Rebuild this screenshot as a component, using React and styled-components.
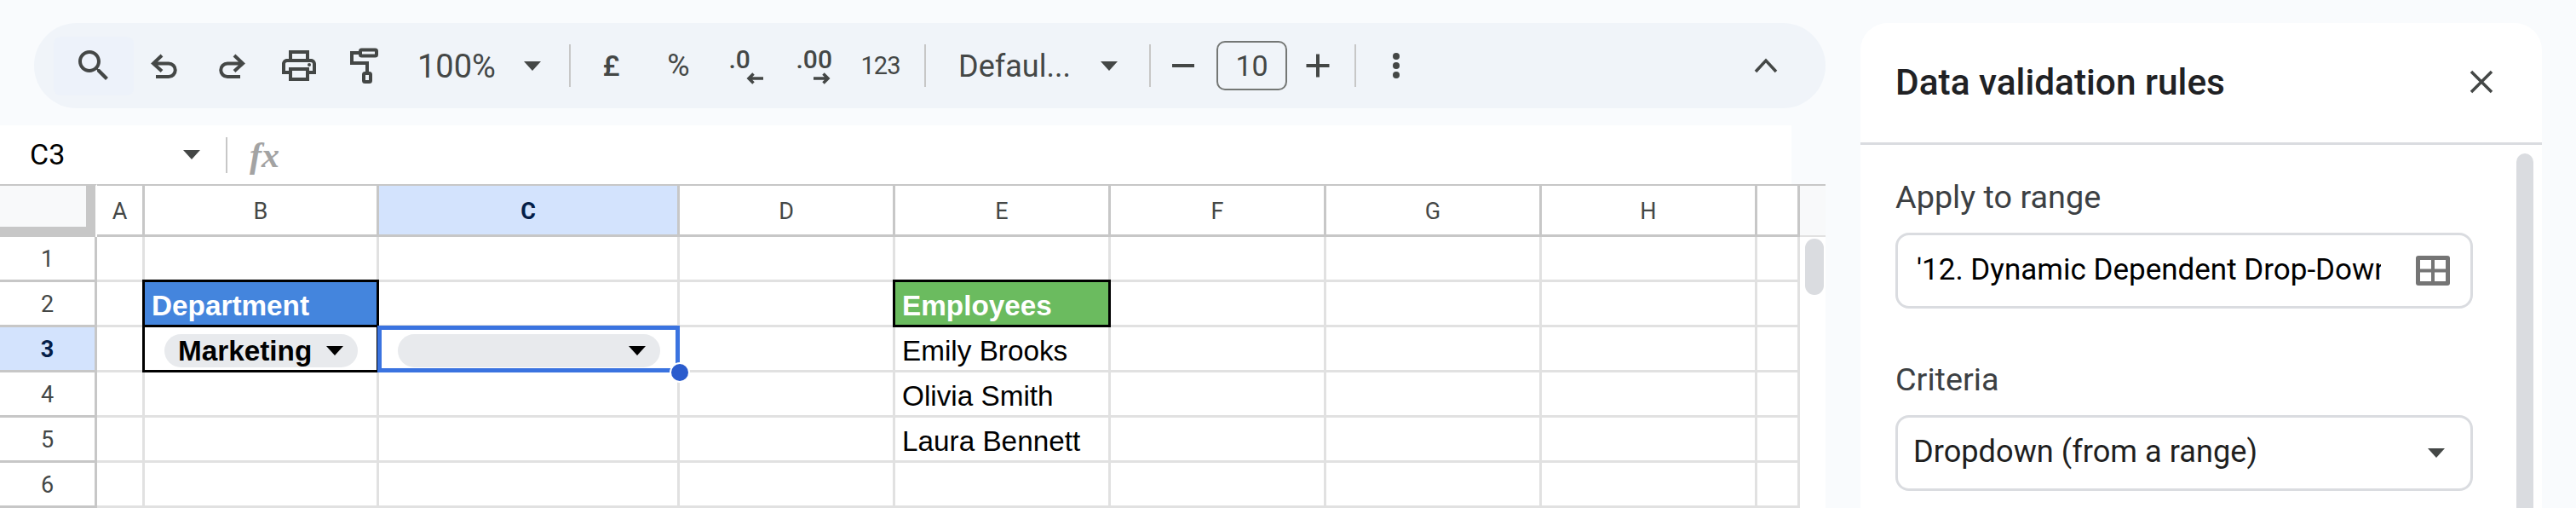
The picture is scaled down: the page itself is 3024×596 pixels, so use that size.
import React from "react";
import styled, { createGlobalStyle } from "styled-components";

const GlobalStyle = createGlobalStyle`
  html, body {
    margin: 0;
    padding: 0;
    height: 596px;
    overflow: hidden;
    background: #f9fbfd;
  }
  * {
    box-sizing: border-box;
  }
`;

const COLUMNS = ["A", "B", "C", "D", "E", "F", "G", "H", ""];
const ROWS = [1, 2, 3, 4, 5, 6];

function ToolbarIcons() {
  return (
    <>
      <SearchButton>
        <Icon viewBox="0 0 24 24" $fill>
          <path d="M15.5 14h-.79l-.28-.27C15.41 12.59 16 11.11 16 9.5 16 5.91 13.09 3 9.5 3S3 5.91 3 9.5 5.91 16 9.5 16c1.61 0 3.09-.59 4.23-1.57l.27.28v.79l5 4.99L20.49 19l-4.99-5zm-6 0C7.01 14 5 11.99 5 9.5S7.01 5 9.5 5 14 7.01 14 9.5 11.99 14 9.5 14z" />
        </Icon>
      </SearchButton>
      <ToolButton>
        <Icon viewBox="0 0 48 48">
          <path d="M21 12 L11 21.5 L21 30.5 M11 21.5 H29 A7.75 7.75 0 0 1 29 37 H14" />
        </Icon>
      </ToolButton>
      <ToolButton>
        <Icon viewBox="0 0 48 48">
          <path d="M27 12 L37 21.5 L27 30.5 M37 21.5 H19 A7.75 7.75 0 0 0 19 37 H34" />
        </Icon>
      </ToolButton>
      <ToolButton>
        <Icon viewBox="0 0 24 24" $fill>
          <path d="M19 8h-1V3H6v5H5c-1.66 0-3 1.34-3 3v6h4v4h12v-4h4v-6c0-1.66-1.34-3-3-3zM8 5h8v3H8V5zm8 12v2H8v-4h8v2zm2-2v-2H6v2H4v-4c0-.55.45-1 1-1h14c.55 0 1 .45 1 1v4h-2z" />
          <circle cx="18" cy="11.5" r="1" />
        </Icon>
      </ToolButton>
      <ToolButton>
        <Icon viewBox="0 0 48 48">
          <rect x="17" y="5.5" width="19" height="7" rx="1.5" />
          <path d="M17 9 H7 V21 H25 V33" />
          <rect x="21" y="33" width="8" height="10" rx="1.5" />
        </Icon>
      </ToolButton>
    </>
  );
}

function Arrow({ left }) {
  return (
    <ArrowIcon viewBox="0 0 20 14">
      <path d={left ? "M20 7 H3 M8.5 1.5 L3 7 L8.5 12.5" : "M0 7 H17 M11.5 1.5 L17 7 L11.5 12.5"} />
    </ArrowIcon>
  );
}

function Toolbar() {
  return (
    <ToolbarBar>
      <ToolbarIcons />
      <Picker $width={199} $pad={21}>
        <PickerLabel $width={125} $size={38}>100%</PickerLabel>
        <Caret />
      </Picker>
      <Divider />
      <FormatGroup>
        <ToolButton><FormatText $size={34} $bold>£</FormatText></ToolButton>
        <ToolButton><FormatText $size={36}>%</FormatText></ToolButton>
        <ToolButton>
          <DecimalStack>
            <DecimalText>.0</DecimalText>
            <Arrow left />
          </DecimalStack>
        </ToolButton>
        <ToolButton>
          <DecimalStack>
            <DecimalText>.00</DecimalText>
            <Arrow />
          </DecimalStack>
        </ToolButton>
        <ToolButton><FormatText $size={29} $tight>123</FormatText></ToolButton>
      </FormatGroup>
      <Divider />
      <Picker $width={262} $pad={38}>
        <PickerLabel $width={167} $size={36}>Defaul...</PickerLabel>
        <Caret />
      </Picker>
      <Divider />
      <SizeButton $width={75} $after={2}>
        <Icon viewBox="0 0 48 48"><path d="M11 24 H37" /></Icon>
      </SizeButton>
      <SizeBox>10</SizeBox>
      <SizeButton $width={72}>
        <Icon viewBox="0 0 48 48"><path d="M10.5 24 H37.5 M24 10.5 V37.5" /></Icon>
      </SizeButton>
      <Divider $before={7} />
      <SizeButton $width={94}>
        <Icon viewBox="0 0 48 48" $fill>
          <circle cx="24" cy="13" r="4" />
          <circle cx="24" cy="24" r="4" />
          <circle cx="24" cy="35" r="4" />
        </Icon>
      </SizeButton>
      <CollapseButton>
        <Icon viewBox="0 0 48 48" $thin><path d="M12 31 L24 18 L36 31" /></Icon>
      </CollapseButton>
    </ToolbarBar>
  );
}

function FormulaRow() {
  return (
    <FormulaBar>
      <NameBox>
        <NameValue>C3</NameValue>
        <Caret />
      </NameBox>
      <FormulaDivider />
      <FxLabel>fx</FxLabel>
    </FormulaBar>
  );
}

function cellContent(col, row) {
  if (col === "B" && row === 2) return <HeaderCellText>Department</HeaderCellText>;
  if (col === "E" && row === 2) return <HeaderCellText>Employees</HeaderCellText>;
  if (col === "E" && row === 3) return <CellText>Emily Brooks</CellText>;
  if (col === "E" && row === 4) return <CellText>Olivia Smith</CellText>;
  if (col === "E" && row === 5) return <CellText>Laura Bennett</CellText>;
  if (col === "B" && row === 3) {
    return (
      <Chip $left={23} $width={227}>
        <ChipText>Marketing</ChipText>
        <Caret $black />
      </Chip>
    );
  }
  if (col === "C" && row === 3) {
    return (
      <Chip $left={22} $width={308}>
        <ChipText />
        <Caret $black />
      </Chip>
    );
  }
  return null;
}

function fillFor(col, row) {
  if (col === "B" && row === 2) return "#4485dd";
  if (col === "E" && row === 2) return "#6bbb5f";
  return "#ffffff";
}

function Sheet() {
  return (
    <SheetGrid>
      <CornerCell><CornerInner /></CornerCell>
      {COLUMNS.map((col, i) => (
        <ColumnHeader key={i} $selected={col === "C"}>{col}</ColumnHeader>
      ))}
      <GutterHead />
      {ROWS.map((row) => (
        <React.Fragment key={row}>
          <RowHeader $selected={row === 3}>{row}</RowHeader>
          {COLUMNS.map((col, i) => (
            <Cell
              key={i}
              $fill={fillFor(col, row)}
              $boxed={(col === "B" && (row === 2 || row === 3)) || (col === "E" && row === 2)}
              $active={col === "C" && row === 3}
            >
              {cellContent(col, row)}
              {col === "C" && row === 3 && <FillHandle />}
            </Cell>
          ))}
        </React.Fragment>
      ))}
      <Gutter>
        <GutterThumb />
      </Gutter>
    </SheetGrid>
  );
}

function SidePanel() {
  return (
    <Panel>
      <PanelHeader>
        <PanelTitle>Data validation rules</PanelTitle>
        <CloseButton>
          <Icon viewBox="0 0 48 48" $thin><path d="M12 12 L36 36 M36 12 L12 36" /></Icon>
        </CloseButton>
      </PanelHeader>
      <PanelBody>
        <PanelForm>
          <FieldLabel>Apply to range</FieldLabel>
          <Field>
            <RangeValue>'12. Dynamic Dependent Drop-Down Lists'!C3</RangeValue>
            <RangeIcon viewBox="0 0 40 35">
              <rect width="40" height="35" rx="3" fill="#757575" />
              <rect x="5" y="5" width="13" height="10.5" fill="#fff" />
              <rect x="22" y="5" width="13" height="10.5" fill="#fff" />
              <rect x="5" y="19.5" width="13" height="10.5" fill="#fff" />
              <rect x="22" y="19.5" width="13" height="10.5" fill="#fff" />
            </RangeIcon>
          </Field>
          <FieldLabel $second>Criteria</FieldLabel>
          <Field $select>
            <SelectValue>Dropdown (from a range)</SelectValue>
            <Caret />
          </Field>
        </PanelForm>
        <PanelScroll />
      </PanelBody>
    </Panel>
  );
}

export default function App() {
  return (
    <Page>
      <GlobalStyle />
      <Workspace>
        <Toolbar />
        <FormulaRow />
        <Sheet />
      </Workspace>
      <SidePanel />
    </Page>
  );
}

const Page = styled.div`
  display: flex;
  width: 3024px;
  height: 596px;
  overflow: hidden;
  background: #f9fbfd;
  font-family: Roboto, "Liberation Sans", sans-serif;
`;

const Workspace = styled.div`
  width: 2143px;
  flex: none;
  padding-top: 27px;
`;

const ToolbarBar = styled.div`
  display: flex;
  align-items: center;
  height: 100px;
  margin: 0 0 20px 40px;
  padding: 0 46px 0 23px;
  background: #f0f4f9;
  border-radius: 50px;
  color: #444746;
`;

const Icon = styled.svg`
  width: 48px;
  height: 48px;
  flex: none;
  fill: ${(p) => (p.$fill ? "#444746" : "none")};
  stroke: ${(p) => (p.$fill ? "none" : "#444746")};
  stroke-width: ${(p) => (p.$thin ? 3.5 : 4)};
`;

const SearchButton = styled.div`
  display: flex;
  align-items: center;
  justify-content: center;
  flex: none;
  width: 94px;
  height: 69px;
  margin-right: -4px;
  background: #edf2fa;
  border-radius: 8px;
`;

const ToolButton = styled.div`
  display: flex;
  align-items: center;
  justify-content: center;
  flex: none;
  width: 79px;
  height: 60px;
`;

const Picker = styled.div`
  display: flex;
  align-items: center;
  flex: none;
  width: ${(p) => p.$width}px;
  padding-left: ${(p) => p.$pad}px;
`;

const PickerLabel = styled.span`
  flex: none;
  width: ${(p) => p.$width}px;
  padding-top: 2px;
  font-size: ${(p) => p.$size}px;
`;

const Caret = styled.span`
  flex: none;
  width: 0;
  height: 0;
  border-left: 10px solid transparent;
  border-right: 10px solid transparent;
  border-top: 11px solid ${(p) => (p.$black ? "#000000" : "#444746")};
`;

const Divider = styled.div`
  flex: none;
  width: 2px;
  height: 50px;
  margin-left: ${(p) => p.$before || 0}px;
  background: #c7c7c7;
`;

const FormatGroup = styled.div`
  display: flex;
  flex: none;
  margin: 0 12px 0 8px;
`;

const FormatText = styled.span`
  font-size: ${(p) => p.$size}px;
  font-weight: ${(p) => (p.$bold ? 500 : 400)};
  letter-spacing: ${(p) => (p.$tight ? "-1px" : "0")};
`;

const DecimalStack = styled.div`
  display: flex;
  flex-direction: column;
  width: 40px;
  padding: 4px 0 2px;
`;

const DecimalText = styled.span`
  font-size: 30px;
  font-weight: 500;
  line-height: 24px;
`;

const ArrowIcon = styled.svg`
  width: 20px;
  height: 14px;
  margin: 3px 0 0 20px;
  fill: none;
  stroke: #444746;
  stroke-width: 3.5;
`;

const SizeButton = styled.div`
  display: flex;
  align-items: center;
  justify-content: center;
  flex: none;
  width: ${(p) => p.$width}px;
  margin-right: ${(p) => p.$after || 0}px;
`;

const SizeBox = styled.div`
  display: flex;
  align-items: center;
  justify-content: center;
  flex: none;
  width: 83px;
  height: 58px;
  border: 2px solid #747775;
  border-radius: 10px;
  font-size: 34px;
`;

const CollapseButton = styled.div`
  display: flex;
  margin-left: auto;
`;

const FormulaBar = styled.div`
  display: flex;
  align-items: center;
  width: 2103px;
  height: 69px;
  background: #ffffff;
`;

const NameBox = styled.div`
  display: flex;
  align-items: center;
  justify-content: space-between;
  width: 265px;
  padding: 0 30px 0 35px;
  font-size: 34px;
  color: #000000;
`;

const NameValue = styled.span`
  padding-bottom: 2px;
`;

const FormulaDivider = styled.div`
  width: 2px;
  height: 42px;
  background: #c7c7c7;
`;

const FxLabel = styled.span`
  margin-left: 26px;
  font-family: "Liberation Serif", serif;
  font-style: italic;
  font-weight: 700;
  font-size: 42px;
  color: #a3a3a3;
`;

const SheetGrid = styled.div`
  display: grid;
  grid-template-columns: 114px 56px 275px 353px 253px 253px 253px 253px 253px 50px 30px;
  grid-template-rows: 62px repeat(6, 53px);
  width: 2143px;
  background: #ffffff;
  font-family: Roboto, sans-serif;
`;

const CornerCell = styled.div`
  border-top: 2px solid #c7c7c7;
  background: #c7c7c7;
  padding: 0 11px 12px 0;
  border-right: 2px solid #ffffff;
`;

const CornerInner = styled.div`
  height: 100%;
  background: #f8f9fa;
`;

const ColumnHeader = styled.div`
  display: flex;
  align-items: center;
  justify-content: center;
  padding-top: 2px;
  border-top: 2px solid #c7c7c7;
  border-bottom: 3px solid #c7c7c7;
  border-right: 3px solid #c7c7c7;
  background: ${(p) => (p.$selected ? "#d3e3fd" : "#ffffff")};
  color: ${(p) => (p.$selected ? "#041e49" : "#444746")};
  font-size: 27px;
  font-weight: ${(p) => (p.$selected ? 700 : 400)};
`;

const GutterHead = styled.div`
  border-top: 2px solid #c7c7c7;
  border-bottom: 2px solid #e1e1e1;
  background: #f8f9fa;
`;

const RowHeader = styled.div`
  display: flex;
  align-items: center;
  justify-content: center;
  padding-top: 2px;
  border-bottom: 3px solid #c7c7c7;
  border-right: 3px solid #c7c7c7;
  background: ${(p) => (p.$selected ? "#d3e3fd" : "#ffffff")};
  color: ${(p) => (p.$selected ? "#041e49" : "#444746")};
  font-size: 27px;
  font-weight: ${(p) => (p.$selected ? 700 : 400)};
`;

const Cell = styled.div`
  position: relative;
  display: flex;
  align-items: flex-end;
  border-bottom: 3px solid #e1e1e1;
  border-right: 3px solid #e1e1e1;
  background: ${(p) => p.$fill};
  font-family: "Liberation Sans", Arial, sans-serif;
  font-size: 33.3px;
  color: #000000;

  ${(p) => p.$boxed && `
    &::after {
      content: "";
      position: absolute;
      inset: -3px -3px -3px -3px;
      border: 3px solid #000000;
    }
  `}

  ${(p) => p.$active && `
    &::after {
      content: "";
      position: absolute;
      inset: -2px -3px -3px -2px;
      border: 5px solid #3a73e0;
      z-index: 2;
    }
  `}
`;

const CellText = styled.span`
  padding-left: 8px;
  line-height: 44px;
`;

const HeaderCellText = styled(CellText)`
  font-weight: 700;
  color: #ffffff;
`;

const Chip = styled.div`
  position: absolute;
  top: 8px;
  left: ${(p) => p.$left}px;
  display: flex;
  align-items: center;
  justify-content: space-between;
  width: ${(p) => p.$width}px;
  height: 39px;
  padding: 0 17px 0 16px;
  border-radius: 20px;
  background: #e8eaed;
  z-index: 3;
`;

const ChipText = styled.span`
  font-weight: 700;
  color: #000000;
  line-height: 39px;
`;

const FillHandle = styled.div`
  position: absolute;
  right: -15px;
  bottom: -15px;
  width: 24px;
  height: 24px;
  border: 2px solid #ffffff;
  border-radius: 50%;
  background: #2b5ccd;
  z-index: 4;
`;

const Gutter = styled.div`
  grid-column: 11;
  grid-row: 2 / span 6;
  padding: 2px 2px 0 6px;
  background: #ffffff;
`;

const GutterThumb = styled.div`
  width: 22px;
  height: 66px;
  border-radius: 11px;
  background: #dadce0;
`;

const Panel = styled.div`
  flex: none;
  width: 800px;
  height: 620px;
  margin: 27px 0 0 41px;
  background: #ffffff;
  border-radius: 32px 32px 0 0;
`;

const PanelHeader = styled.div`
  display: flex;
  align-items: center;
  justify-content: space-between;
  height: 143px;
  padding: 0 47px 2px 41px;
  border-bottom: 3px solid #dadce0;
`;

const PanelTitle = styled.div`
  font-size: 42.4px;
  font-weight: 500;
  color: #202124;
`;

const CloseButton = styled.div`
  display: flex;
`;

const PanelBody = styled.div`
  display: flex;
  height: 470px;
  padding: 10px 0 0 41px;
`;

const PanelForm = styled.div`
  flex: none;
  width: 678px;
  padding-top: 29px;
`;

const PanelScroll = styled.div`
  flex: none;
  width: 20px;
  height: 100%;
  margin-left: 51px;
  border-radius: 10px 10px 0 0;
  background: #dadce0;
`;

const FieldLabel = styled.div`
  height: 44px;
  margin: ${(p) => (p.$second ? "61px" : "0")} 0 20px;
  font-size: 37.8px;
  line-height: 44px;
  color: #3c4043;
`;

const Field = styled.div`
  display: flex;
  align-items: center;
  justify-content: ${(p) => (p.$select ? "space-between" : "flex-start")};
  height: 89px;
  padding: 0 ${(p) => (p.$select ? "30px" : "0")} 0 ${(p) => (p.$select ? "18px" : "22px")};
  border: 3px solid #dadce0;
  border-radius: 16px;
`;

const RangeValue = styled.div`
  flex: none;
  width: 545px;
  padding-bottom: 2px;
  overflow: hidden;
  white-space: nowrap;
  font-size: 35px;
  color: #000000;
`;

const RangeIcon = styled.svg`
  flex: none;
  width: 40px;
  height: 35px;
  margin-left: 41px;
`;

const SelectValue = styled.div`
  padding-bottom: 4px;
  font-size: 36.2px;
  color: #1f1f1f;
`;
